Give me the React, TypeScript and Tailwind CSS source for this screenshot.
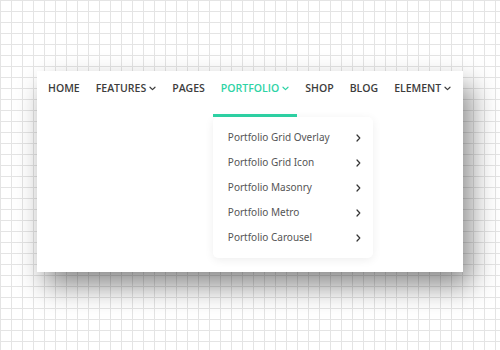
import React from "react";

const Chevron = () => (
  <svg width="7" height="5" viewBox="0 0 7 5" fill="none">
    <path d="M1 1.2 L3.5 3.6 L6 1.2" stroke="currentColor" strokeWidth="1.2" strokeLinecap="round" strokeLinejoin="round" />
  </svg>
);

const Right = () => (
  <svg width="5" height="8" viewBox="0 0 5 8" fill="none" className="text-[#333]">
    <path d="M1 1 L3.8 4 L1 7" stroke="currentColor" strokeWidth="1.2" strokeLinecap="round" strokeLinejoin="round" />
  </svg>
);

const navItems = [
  { label: "HOME" },
  { label: "FEATURES", chev: true },
  { label: "PAGES" },
  { label: "PORTFOLIO", chev: true, active: true },
  { label: "SHOP" },
  { label: "BLOG" },
  { label: "ELEMENT", chev: true },
];

const dropdown = [
  "Portfolio Grid Overlay",
  "Portfolio Grid Icon",
  "Portfolio Masonry",
  "Portfolio Metro",
  "Portfolio Carousel",
];

export default function App() {
  return (
    <div className="w-[500px] h-[350px] overflow-hidden bg-white bg-[linear-gradient(to_right,#e4e4e4_1px,transparent_1px),linear-gradient(to_bottom,#e4e4e4_1px,transparent_1px)] bg-[size:11px_11px] pt-[71px] pl-[37px]">
      <div className="w-[426px] h-[201px] bg-white shadow-[8px_14px_26px_rgba(0,0,0,0.45)] pl-[3px]">
        <nav className="flex h-[46px]" style={{ fontFamily: '"Open Sans", sans-serif' }}>
          {navItems.map((it) => (
            <div key={it.label} className="relative flex flex-col">
              <div
                className={`flex items-start gap-[3px] px-2 h-[43px] pt-[10px] leading-[14px] text-[10.5px] font-semibold ${
                  it.active ? "text-[#2ed3a5]" : "text-[#3d3d3d]"
                }`}
              >
                <span>{it.label}</span>
                {it.chev && (
                  <span className="h-[14px] flex items-center pt-[1px]">
                    <Chevron />
                  </span>
                )}
              </div>
              <div className={`h-[3px] ${it.active ? "bg-[#2ed3a5]" : ""}`} />
              {it.active && (
                <div className="absolute left-0 top-[46px] w-[160px] bg-white rounded-[5px] shadow-[0_2px_10px_rgba(0,0,0,0.07)] py-2 z-10">
                  {dropdown.map((d) => (
                    <div
                      key={d}
                      className="flex items-center justify-between h-[25px] pl-[15px] pr-[12px] text-[10px] text-[#555]"
                      style={{ fontFamily: '"Noto Sans", sans-serif' }}
                    >
                      <span>{d}</span>
                      <Right />
                    </div>
                  ))}
                </div>
              )}
            </div>
          ))}
        </nav>
      </div>
    </div>
  );
}
